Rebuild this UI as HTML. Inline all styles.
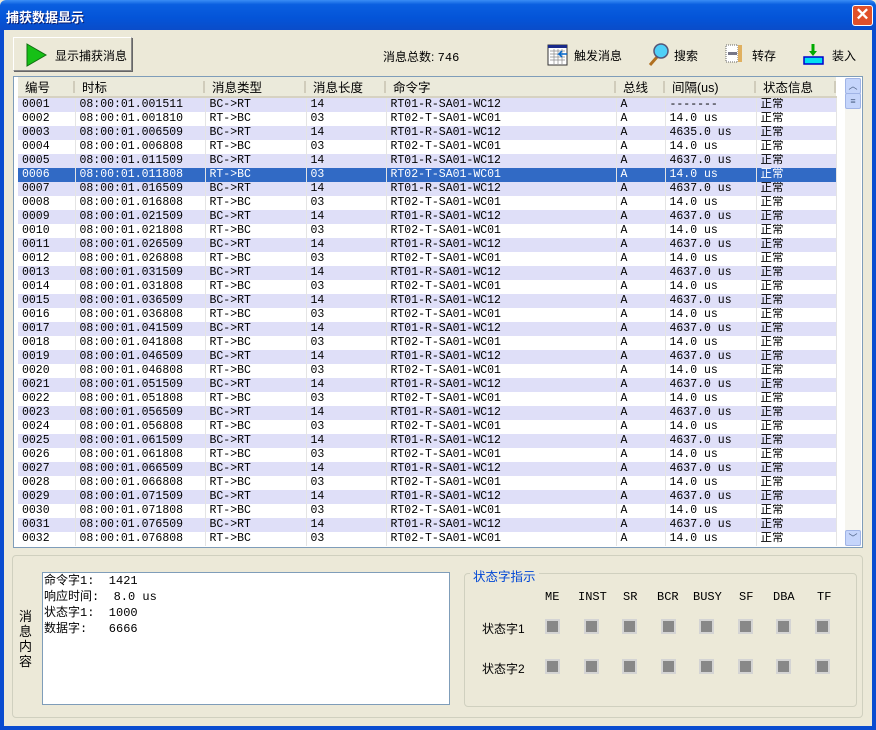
<!DOCTYPE html>
<html><head><meta charset="utf-8"><style>
*{box-sizing:border-box;margin:0;padding:0}
body{width:876px;height:730px;overflow:hidden;background:#ece9d8;font-family:"Liberation Sans","Noto Sans CJK SC",sans-serif;font-size:12px;position:relative}
.title{position:absolute;left:0;top:0;width:876px;height:30px;background:linear-gradient(#3a8df5 0%,#0a5fe0 15%,#0454d8 60%,#0a4cc9 100%);border-radius:6px 6px 0 0}
.title span{position:absolute;left:6px;top:7px;color:#fff;font-weight:bold;font-size:13px;text-shadow:1px 1px #0a1e70}
.close{position:absolute;left:852px;top:5px;width:21px;height:21px;background:#e0502a;border:1px solid #fff;border-radius:3px;color:#fff;font-size:17px;font-weight:bold;text-align:center;line-height:18px}
.bl{position:absolute;top:30px;width:4px;height:700px;background:#0a4cd0}
.bb{position:absolute;left:0;top:726px;width:876px;height:4px;background:#0a4cd0}
.abs{position:absolute}
.btn{left:13px;top:37px;width:119px;height:34px;border:1px solid #888;border-top-color:#fff;border-left-color:#fff;box-shadow:1px 1px #666;background:#ece9d8}
.grid{left:13px;top:76px;width:850px;height:472px;border:1px solid #7f9db9;background:#fff;overflow:hidden}
table{border-collapse:collapse;table-layout:fixed;position:absolute;left:4px;top:0;font-family:"Liberation Mono","Noto Sans CJK SC",monospace;font-size:11.5px}
td{height:14px;line-height:14px;padding:0 0 0 4px;border-right:1px solid #e4e4e4;white-space:nowrap;overflow:hidden}
tr.o td{background:#dfdff8}
tr.s td{background:#316ac5;color:#fff}
th{height:20px;font-weight:normal;text-align:left;padding-left:7px;background:#ebeadb;border-bottom:2px solid #d6d2c2;font-family:"Liberation Sans","Noto Sans CJK SC",sans-serif;font-size:12.5px;position:relative}
th:after{content:"";position:absolute;right:0;top:4px;height:12px;border-right:2px solid #d0ccbb}
.sb{left:845px;top:78px;width:16px;height:468px;background:#f6f5ef}
.sbb{position:absolute;left:0;width:16px;height:16px;background:#c5d5fb;border:1px solid #a0b4e6;border-radius:2px;font-size:9px;color:#4d6185;text-align:center;line-height:14px}
.grp{border:1px solid #d0d0bf;border-radius:4px}
.sq{position:absolute;width:11px;height:11px;background:#888;box-shadow:0 0 0 2px #d4d4d4;margin:-1px}
.lab{position:absolute;font-family:"Liberation Mono",monospace;font-size:12px}
</style></head><body>
<div class="title"><span>捕获数据显示</span><div class="close">✕</div></div>
<div class="bl" style="left:0"></div><div class="bl" style="left:872px"></div><div class="bb"></div>

<div class="abs btn">
<svg class="abs" style="left:11px;top:5px" width="22" height="24"><polygon points="2,1 21,12 2,23" fill="#16c016" stroke="#107010"/></svg>
<span class="abs" style="left:41px;top:9px">显示捕获消息</span></div>
<div class="abs" style="left:383px;top:48px">消息总数: <span style="font-family:'Liberation Mono'">746</span></div>

<svg class="abs" style="left:547px;top:44px" width="22" height="22"><rect x="1" y="1" width="19" height="20" fill="#fff" stroke="#333"/><rect x="1" y="1" width="19" height="3" fill="#1a2a8a"/><path d="M3 7h15M3 10h15M3 13h15M3 16h15M7 5v15M11 5v15M15 5v15" stroke="#888" stroke-width=".7"/><path d="M20 10h-8l3-3M12 10l3 3" stroke="#06c" stroke-width="1.5" fill="none"/></svg>
<span class="abs" style="left:574px;top:47px">触发消息</span>
<svg class="abs" style="left:646px;top:42px" width="24" height="26"><line x1="4" y1="23" x2="11" y2="15" stroke="#b07020" stroke-width="3"/><circle cx="15" cy="9" r="7" fill="#4fd0f8" stroke="#557" stroke-width="1.5"/></svg>
<span class="abs" style="left:674px;top:47px">搜索</span>
<svg class="abs" style="left:725px;top:44px" width="18" height="20"><rect x="1" y="1" width="12" height="17" fill="#fff" stroke="#666" stroke-dasharray="1,1"/><rect x="13" y="1" width="4" height="17" fill="#e0b060"/><rect x="3" y="8" width="9" height="3" fill="#778"/></svg>
<span class="abs" style="left:752px;top:47px">转存</span>
<svg class="abs" style="left:803px;top:43px" width="22" height="22"><rect x="1" y="14" width="19" height="7" fill="#00e0f0" stroke="#00c" stroke-width="1.5"/><path d="M10 1v9" stroke="#0a0" stroke-width="3"/><path d="M6 8l4 5 4-5z" fill="#0a0"/></svg>
<span class="abs" style="left:832px;top:47px">装入</span>

<div class="abs grid">
<table>
<colgroup><col style="width:57px"><col style="width:130px"><col style="width:101px"><col style="width:80px"><col style="width:230px"><col style="width:49px"><col style="width:91px"><col style="width:80px"></colgroup>
<tr><th>编号</th><th>时标</th><th>消息类型</th><th>消息长度</th><th>命令字</th><th>总线</th><th>间隔(us)</th><th>状态信息</th></tr>
<tr class="o"><td>0001</td><td>08:00:01.001511</td><td>BC->RT</td><td>14</td><td>RT01-R-SA01-WC12</td><td>A</td><td>-------</td><td>正常</td></tr>
<tr><td>0002</td><td>08:00:01.001810</td><td>RT->BC</td><td>03</td><td>RT02-T-SA01-WC01</td><td>A</td><td>14.0 us</td><td>正常</td></tr>
<tr class="o"><td>0003</td><td>08:00:01.006509</td><td>BC->RT</td><td>14</td><td>RT01-R-SA01-WC12</td><td>A</td><td>4635.0 us</td><td>正常</td></tr>
<tr><td>0004</td><td>08:00:01.006808</td><td>RT->BC</td><td>03</td><td>RT02-T-SA01-WC01</td><td>A</td><td>14.0 us</td><td>正常</td></tr>
<tr class="o"><td>0005</td><td>08:00:01.011509</td><td>BC->RT</td><td>14</td><td>RT01-R-SA01-WC12</td><td>A</td><td>4637.0 us</td><td>正常</td></tr>
<tr class="s"><td>0006</td><td>08:00:01.011808</td><td>RT->BC</td><td>03</td><td>RT02-T-SA01-WC01</td><td>A</td><td>14.0 us</td><td>正常</td></tr>
<tr class="o"><td>0007</td><td>08:00:01.016509</td><td>BC->RT</td><td>14</td><td>RT01-R-SA01-WC12</td><td>A</td><td>4637.0 us</td><td>正常</td></tr>
<tr><td>0008</td><td>08:00:01.016808</td><td>RT->BC</td><td>03</td><td>RT02-T-SA01-WC01</td><td>A</td><td>14.0 us</td><td>正常</td></tr>
<tr class="o"><td>0009</td><td>08:00:01.021509</td><td>BC->RT</td><td>14</td><td>RT01-R-SA01-WC12</td><td>A</td><td>4637.0 us</td><td>正常</td></tr>
<tr><td>0010</td><td>08:00:01.021808</td><td>RT->BC</td><td>03</td><td>RT02-T-SA01-WC01</td><td>A</td><td>14.0 us</td><td>正常</td></tr>
<tr class="o"><td>0011</td><td>08:00:01.026509</td><td>BC->RT</td><td>14</td><td>RT01-R-SA01-WC12</td><td>A</td><td>4637.0 us</td><td>正常</td></tr>
<tr><td>0012</td><td>08:00:01.026808</td><td>RT->BC</td><td>03</td><td>RT02-T-SA01-WC01</td><td>A</td><td>14.0 us</td><td>正常</td></tr>
<tr class="o"><td>0013</td><td>08:00:01.031509</td><td>BC->RT</td><td>14</td><td>RT01-R-SA01-WC12</td><td>A</td><td>4637.0 us</td><td>正常</td></tr>
<tr><td>0014</td><td>08:00:01.031808</td><td>RT->BC</td><td>03</td><td>RT02-T-SA01-WC01</td><td>A</td><td>14.0 us</td><td>正常</td></tr>
<tr class="o"><td>0015</td><td>08:00:01.036509</td><td>BC->RT</td><td>14</td><td>RT01-R-SA01-WC12</td><td>A</td><td>4637.0 us</td><td>正常</td></tr>
<tr><td>0016</td><td>08:00:01.036808</td><td>RT->BC</td><td>03</td><td>RT02-T-SA01-WC01</td><td>A</td><td>14.0 us</td><td>正常</td></tr>
<tr class="o"><td>0017</td><td>08:00:01.041509</td><td>BC->RT</td><td>14</td><td>RT01-R-SA01-WC12</td><td>A</td><td>4637.0 us</td><td>正常</td></tr>
<tr><td>0018</td><td>08:00:01.041808</td><td>RT->BC</td><td>03</td><td>RT02-T-SA01-WC01</td><td>A</td><td>14.0 us</td><td>正常</td></tr>
<tr class="o"><td>0019</td><td>08:00:01.046509</td><td>BC->RT</td><td>14</td><td>RT01-R-SA01-WC12</td><td>A</td><td>4637.0 us</td><td>正常</td></tr>
<tr><td>0020</td><td>08:00:01.046808</td><td>RT->BC</td><td>03</td><td>RT02-T-SA01-WC01</td><td>A</td><td>14.0 us</td><td>正常</td></tr>
<tr class="o"><td>0021</td><td>08:00:01.051509</td><td>BC->RT</td><td>14</td><td>RT01-R-SA01-WC12</td><td>A</td><td>4637.0 us</td><td>正常</td></tr>
<tr><td>0022</td><td>08:00:01.051808</td><td>RT->BC</td><td>03</td><td>RT02-T-SA01-WC01</td><td>A</td><td>14.0 us</td><td>正常</td></tr>
<tr class="o"><td>0023</td><td>08:00:01.056509</td><td>BC->RT</td><td>14</td><td>RT01-R-SA01-WC12</td><td>A</td><td>4637.0 us</td><td>正常</td></tr>
<tr><td>0024</td><td>08:00:01.056808</td><td>RT->BC</td><td>03</td><td>RT02-T-SA01-WC01</td><td>A</td><td>14.0 us</td><td>正常</td></tr>
<tr class="o"><td>0025</td><td>08:00:01.061509</td><td>BC->RT</td><td>14</td><td>RT01-R-SA01-WC12</td><td>A</td><td>4637.0 us</td><td>正常</td></tr>
<tr><td>0026</td><td>08:00:01.061808</td><td>RT->BC</td><td>03</td><td>RT02-T-SA01-WC01</td><td>A</td><td>14.0 us</td><td>正常</td></tr>
<tr class="o"><td>0027</td><td>08:00:01.066509</td><td>BC->RT</td><td>14</td><td>RT01-R-SA01-WC12</td><td>A</td><td>4637.0 us</td><td>正常</td></tr>
<tr><td>0028</td><td>08:00:01.066808</td><td>RT->BC</td><td>03</td><td>RT02-T-SA01-WC01</td><td>A</td><td>14.0 us</td><td>正常</td></tr>
<tr class="o"><td>0029</td><td>08:00:01.071509</td><td>BC->RT</td><td>14</td><td>RT01-R-SA01-WC12</td><td>A</td><td>4637.0 us</td><td>正常</td></tr>
<tr><td>0030</td><td>08:00:01.071808</td><td>RT->BC</td><td>03</td><td>RT02-T-SA01-WC01</td><td>A</td><td>14.0 us</td><td>正常</td></tr>
<tr class="o"><td>0031</td><td>08:00:01.076509</td><td>BC->RT</td><td>14</td><td>RT01-R-SA01-WC12</td><td>A</td><td>4637.0 us</td><td>正常</td></tr>
<tr><td>0032</td><td>08:00:01.076808</td><td>RT->BC</td><td>03</td><td>RT02-T-SA01-WC01</td><td>A</td><td>14.0 us</td><td>正常</td></tr>
</table>
</div>
<div class="abs sb"><div class="sbb" style="top:0">︿</div><div class="sbb" style="top:15px">≡</div><div class="sbb" style="top:452px">﹀</div></div>

<div class="abs grp" style="left:12px;top:555px;width:851px;height:163px"></div>
<div class="abs" style="left:19px;top:609px;width:14px;line-height:15px;font-size:13px">消息内容</div>
<div class="abs" style="left:42px;top:572px;width:408px;height:133px;background:#fff;border:1px solid #7f9db9;padding:0 1px;line-height:16px;font-size:12px;white-space:pre;font-family:'Liberation Mono','Noto Sans CJK SC',monospace">命令字1:  1421
响应时间:  8.0 us
状态字1:  1000
数据字:   6666</div>

<div class="abs grp" style="left:464px;top:573px;width:393px;height:134px"></div>
<div class="abs" style="left:470px;top:566px;background:#ece9d8;color:#0046d5;padding:0 3px;font-size:12.5px">状态字指示</div>
<div class="lab" style="left:545px;top:590px">ME</div>
<div class="lab" style="left:578px;top:590px">INST</div>
<div class="lab" style="left:623px;top:590px">SR</div>
<div class="lab" style="left:657px;top:590px">BCR</div>
<div class="lab" style="left:693px;top:590px">BUSY</div>
<div class="lab" style="left:739px;top:590px">SF</div>
<div class="lab" style="left:773px;top:590px">DBA</div>
<div class="lab" style="left:817px;top:590px">TF</div>
<div class="abs" style="left:482px;top:620px">状态字1</div>
<div class="abs" style="left:482px;top:660px">状态字2</div>
<div class="sq" style="left:548px;top:622px"></div><div class="sq" style="left:587px;top:622px"></div><div class="sq" style="left:625px;top:622px"></div><div class="sq" style="left:664px;top:622px"></div><div class="sq" style="left:702px;top:622px"></div><div class="sq" style="left:741px;top:622px"></div><div class="sq" style="left:779px;top:622px"></div><div class="sq" style="left:818px;top:622px"></div>
<div class="sq" style="left:548px;top:662px"></div><div class="sq" style="left:587px;top:662px"></div><div class="sq" style="left:625px;top:662px"></div><div class="sq" style="left:664px;top:662px"></div><div class="sq" style="left:702px;top:662px"></div><div class="sq" style="left:741px;top:662px"></div><div class="sq" style="left:779px;top:662px"></div><div class="sq" style="left:818px;top:662px"></div>
</body></html>
